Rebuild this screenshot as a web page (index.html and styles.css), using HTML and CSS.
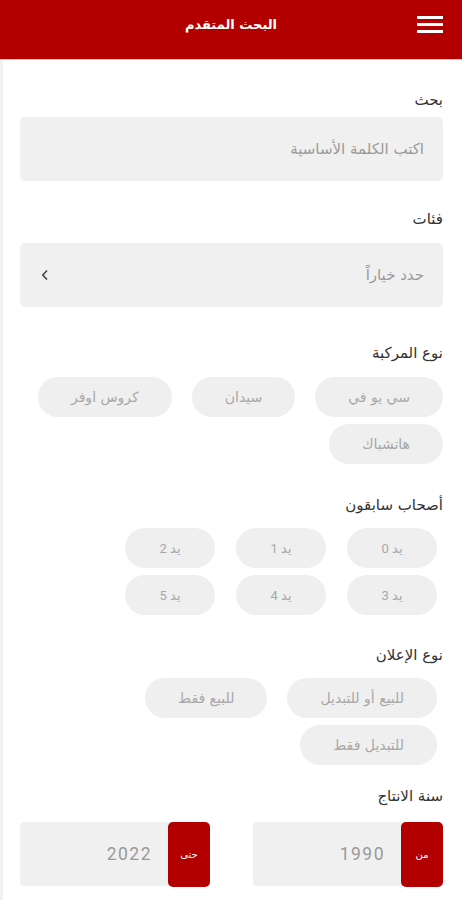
FILE: index.html
```html
<!DOCTYPE html>
<html lang="ar" dir="rtl">
<head>
<meta charset="utf-8">
<title>البحث المتقدم</title>
<link rel="stylesheet" href="styles.css">
</head>
<body>
<header class="topbar">
  <button class="menu-btn" aria-label="menu">
    <svg width="26" height="18" viewBox="0 0 26 18"><rect x="0" y="0" width="26" height="3" fill="#fff"/><rect x="0" y="7" width="26" height="3" fill="#fff"/><rect x="0" y="14" width="26" height="3" fill="#fff"/></svg>
  </button>
  <h1 class="title">البحث المتقدم</h1>
</header>
<main class="page">
  <section class="sec sec-search">
    <div class="label">بحث</div>
    <div class="field"><span class="placeholder">اكتب الكلمة الأساسية</span></div>
  </section>
  <section class="sec sec-cat">
    <div class="label">فئات</div>
    <div class="field select"><span class="placeholder">حدد خياراً</span>
      <svg class="chev" width="8" height="12" viewBox="0 0 8 12"><polyline points="6,1.5 1.8,6 6,10.5" fill="none" stroke="#444" stroke-width="1.6"/></svg>
    </div>
  </section>
  <section class="sec sec-type">
    <div class="label">نوع المركبة</div>
    <div class="chips chips-type">
      <span class="chip">سي يو في</span>
      <span class="chip">سيدان</span>
      <span class="chip">كروس اوفر</span>
      <span class="chip">هاتشباك</span>
    </div>
  </section>
  <section class="sec sec-owners">
    <div class="label">أصحاب سابقون</div>
    <div class="chips chips-owners">
      <span class="chip fixed">يد 0</span>
      <span class="chip fixed">يد 1</span>
      <span class="chip fixed">يد 2</span>
      <span class="chip fixed">يد 3</span>
      <span class="chip fixed">يد 4</span>
      <span class="chip fixed">يد 5</span>
    </div>
  </section>
  <section class="sec sec-ad">
    <div class="label">نوع الإعلان</div>
    <div class="chips chips-ad">
      <span class="chip">للبيع أو للتبديل</span>
      <span class="chip">للبيع فقط</span>
      <span class="chip">للتبديل فقط</span>
    </div>
  </section>
  <section class="sec sec-year">
    <div class="label">سنة الانتاج</div>
    <div class="years">
      <div class="year"><span class="tag">من</span><span class="val">1990</span></div>
      <div class="year"><span class="tag">حتى</span><span class="val">2022</span></div>
    </div>
  </section>
</main>
</body>
</html>
```
FILE: styles.css
```css
html, body {
  margin: 0;
  padding: 0;
  background: #fff;
}
body {
  font-family: "DejaVu Sans", sans-serif;
  width: 462px;
  min-height: 900px;
  overflow: hidden;
}
.topbar {
  height: 59px;
  background: #b20000;
  border-bottom: 1px solid #f0c4c4;
  display: flex;
  align-items: flex-start;
  position: relative;
}
.menu-btn {
  background: none;
  border: 0;
  padding: 0;
  margin-right: 19px;
  margin-top: 16px;
  width: 26px;
  height: 18px;
  display: flex;
}
.title {
  position: absolute;
  left: 0;
  right: 0;
  top: 0;
  margin: 0;
  line-height: 50px;
  text-align: center;
  color: #fff;
  font-size: 13px;
  font-weight: bold;
}
.page {
  border-left: 3px solid #f1f1f1;
  padding: 30px 19px 20px 17px;
  min-height: 820px;
}
.label {
  height: 20px;
  line-height: 20px;
  font-size: 15px;
  color: #333;
}
.field {
  height: 64px;
  background: #f0f0f0;
  border-radius: 5px;
  display: flex;
  align-items: center;
  padding: 0 19px;
}
.placeholder {
  color: #9a9a9a;
  font-size: 15px;
}
.select {
  justify-content: space-between;
  padding-left: 21px;
}
.chev { display: block; }
.sec-search .label { margin-bottom: 7px; }
.sec-cat { margin-top: 28px; }
.sec-cat .label { margin-bottom: 14px; }
.sec-type { margin-top: 36px; }
.sec-type .label { margin-bottom: 14px; }
.sec-owners { margin-top: 31px; }
.sec-owners .label { margin-bottom: 13px; }
.sec-ad { margin-top: 30px; }
.sec-ad .label { margin-bottom: 13px; }
.sec-year { margin-top: 21px; }
.sec-year .label { margin-bottom: 16px; }
.chips {
  display: flex;
  flex-wrap: wrap;
  column-gap: 20px;
  row-gap: 7px;
}
.chip {
  height: 40px;
  border-radius: 20px;
  background: #efefef;
  color: #a8a8a8;
  font-size: 14px;
  display: inline-flex;
  align-items: center;
  justify-content: center;
  padding: 0 33px;
}
.chips-owners, .chips-ad { margin-right: 6px; }
.chips-owners {
  width: 312px;
  column-gap: 21px;
}
.chips-ad {
  width: 300px;
}
.chip.fixed {
  width: 90px;
  padding: 0;
  font-size: 13px;
  font-family: Roboto, "DejaVu Sans", sans-serif;
}
.years {
  display: flex;
  gap: 43px;
}
.year {
  width: 190px;
  height: 64px;
  background: #f0f0f0;
  border-radius: 4px;
  display: flex;
  align-items: center;
}
.tag {
  width: 42px;
  height: 65px;
  background: #b20000;
  border-radius: 5px;
  color: #fff;
  font-size: 10px;
  display: flex;
  align-items: center;
  justify-content: center;
}
.val {
  margin-right: 16px;
  font-family: Roboto, sans-serif;
  font-size: 17.5px;
  letter-spacing: 1.5px;
  color: #999;
}
```
